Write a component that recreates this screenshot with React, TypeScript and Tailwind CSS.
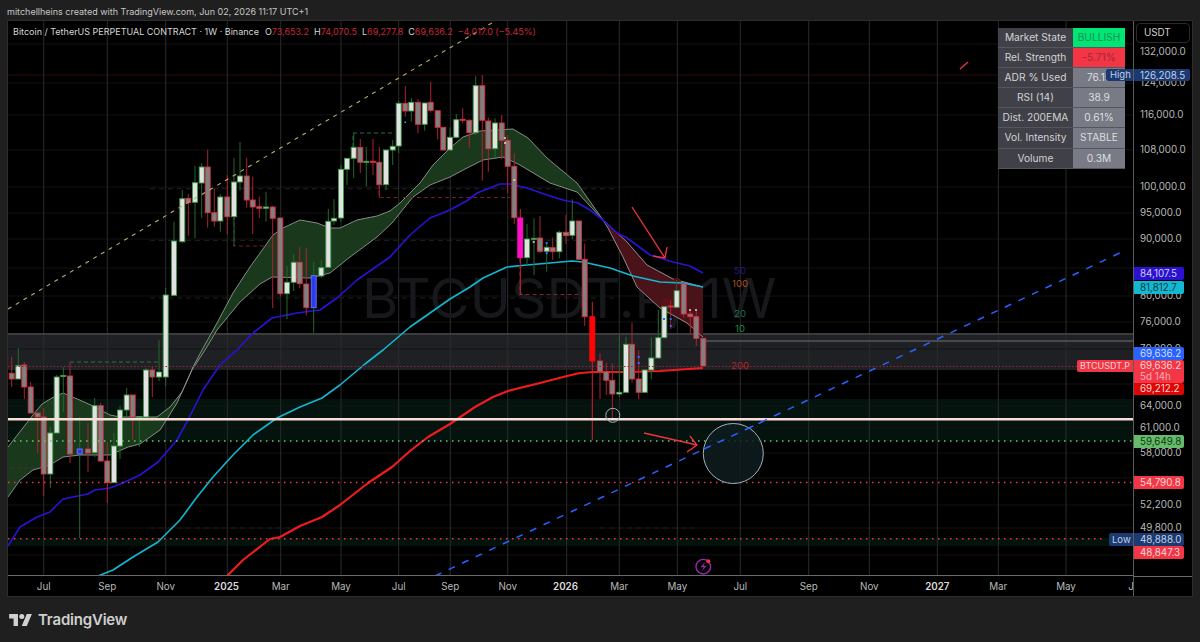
import React from "react";

type Kind = "g" | "r" | "b" | "m" | "f";
type C = [number, number, number, number, number, Kind];

const candles: C[] = [
  [11.7, 373.3, 379, 357, 387, "r"],
  [18.3, 365.7, 379, 348, 379, "g"],
  [24.3, 365, 387, 362, 399, "r"],
  [30.7, 387, 413, 382, 413, "r"],
  [37.7, 413, 417, 413, 453, "r"],
  [43.7, 417, 474, 408, 496, "r"],
  [50.3, 433, 474, 427, 488, "g"],
  [56.7, 377, 433, 375, 433, "g"],
  [63.3, 375.5, 376.5, 367, 412, "g"],
  [70, 376, 454, 362, 463, "r"],
  [79.7, 449, 454, 417, 538, "b"],
  [88, 449, 453, 423, 472, "r"],
  [94.7, 405.7, 452.7, 398, 457, "g"],
  [100.7, 405.7, 461, 403, 461, "r"],
  [107.3, 461, 482.7, 442, 503, "r"],
  [114, 446, 482.7, 433, 483, "g"],
  [120, 410, 446, 406, 459, "g"],
  [126.7, 395, 410, 388, 417, "g"],
  [132.7, 395, 417, 395, 440, "r"],
  [139.3, 416.5, 417.5, 417, 447, "g"],
  [146, 370, 417, 368, 418, "g"],
  [152.3, 370, 377, 367, 397, "r"],
  [159, 372, 377, 340, 381, "g"],
  [165.7, 295, 377, 287.7, 386, "g"],
  [174, 241, 295.3, 221.7, 295.3, "g"],
  [182.3, 198.7, 241.7, 190, 242.7, "g"],
  [188.3, 198.3, 202.7, 194, 235.7, "r"],
  [195, 182.7, 202.3, 166, 238, "g"],
  [201.7, 167, 183, 163, 217.7, "g"],
  [207.7, 167, 212.7, 149.7, 227.7, "r"],
  [214.3, 212.7, 221, 189, 226.7, "r"],
  [220.3, 197, 221, 194, 231.7, "g"],
  [227.3, 197, 216.7, 175, 234, "r"],
  [234, 182, 216.7, 158, 246, "g"],
  [240, 176, 182, 142, 190.7, "g"],
  [246.7, 176, 200, 157.7, 207.7, "r"],
  [252.7, 200, 207, 176.7, 234, "r"],
  [259.3, 206.7, 208.3, 196.7, 218, "r"],
  [266, 207, 208.3, 191.7, 221.7, "g"],
  [272.7, 207, 218.3, 206, 308, "r"],
  [280.3, 218, 293.7, 218, 296.7, "r"],
  [287, 282.3, 293.7, 266, 319, "g"],
  [293.7, 262.3, 282.3, 254, 291, "g"],
  [299.7, 262.3, 283.7, 247.3, 288.3, "r"],
  [306.3, 284, 307.7, 248, 315.3, "r"],
  [313.7, 275.7, 307.7, 262, 332.7, "b"],
  [321.3, 267.7, 276, 260, 278, "g"],
  [328.3, 221.3, 267.3, 209, 267.3, "g"],
  [334, 218.3, 221, 199, 225, "g"],
  [341, 169.3, 218, 165, 221.7, "g"],
  [347, 158.3, 169.3, 158, 185, "g"],
  [353.7, 147.3, 158.3, 133, 178, "g"],
  [360.3, 147.3, 162.3, 139, 173, "r"],
  [366.3, 161.3, 162.3, 147, 186.7, "g"],
  [373, 161.3, 162.3, 139, 175, "r"],
  [379.3, 162.3, 184.7, 147, 197.7, "r"],
  [386, 150, 184.7, 150, 190, "g"],
  [392.7, 146.3, 150, 140, 165, "g"],
  [398.7, 103.3, 146, 100.7, 153, "g"],
  [405.3, 103.3, 111, 86, 116.7, "r"],
  [411.3, 102.3, 111, 98, 121.7, "g"],
  [418, 102.3, 124.3, 99.3, 133.3, "r"],
  [424.7, 103, 124.3, 103, 130.7, "g"],
  [430.7, 102.3, 110.3, 81.7, 112.7, "r"],
  [437.7, 110.7, 127.3, 110.7, 139.3, "r"],
  [443.3, 127.3, 150, 127.3, 150.7, "r"],
  [450, 137.3, 150, 127.3, 150.7, "g"],
  [456.3, 119.7, 137.3, 114, 138.3, "g"],
  [462.7, 119.3, 120, 108.3, 123.3, "r"],
  [469.3, 120.3, 132.7, 119.3, 147.7, "r"],
  [475.7, 85.7, 132.7, 76, 135, "g"],
  [482.3, 85.7, 120.3, 75, 180.7, "r"],
  [488.3, 121, 148.7, 117.3, 171.7, "r"],
  [495, 123, 148.7, 118.3, 158.3, "g"],
  [501.7, 123, 140.3, 115, 159.3, "r"],
  [507.7, 140.3, 166.3, 135, 193.3, "r"],
  [514.3, 166.3, 217.7, 153.3, 224, "r"],
  [520.3, 218, 257.7, 209, 295, "m"],
  [527, 239, 257.7, 224, 265, "g"],
  [534, 238.3, 239.3, 218.3, 275, "g"],
  [540, 238, 251.3, 216, 253.3, "r"],
  [546.7, 247.3, 251.3, 243.3, 271.7, "g"],
  [552.7, 247.7, 251.7, 237.7, 260, "r"],
  [559.3, 232.3, 251.7, 230.7, 258.3, "g"],
  [566, 232.3, 235.7, 214.7, 244, "r"],
  [572.3, 221, 235.3, 199.3, 239.3, "g"],
  [579, 221, 259.3, 221, 260, "r"],
  [584.7, 259.3, 316.7, 244, 326, "r"],
  [592.3, 316.7, 361, 301.7, 440, "f"],
  [600, 361, 371.7, 353.3, 399, "r"],
  [606.3, 371.7, 380.3, 362.7, 395, "r"],
  [612.3, 380.3, 394, 363.3, 420, "r"],
  [619.3, 392.3, 394, 335, 396.7, "g"],
  [626, 344.3, 392.3, 336.7, 393.3, "g"],
  [632, 344.3, 379, 322.7, 382.7, "r"],
  [638.7, 379, 392.3, 350, 399.3, "r"],
  [644.7, 370, 392.3, 370, 393, "g"],
  [651.3, 358, 370, 337.3, 379.3, "g"],
  [658.3, 337.7, 358, 310, 358.3, "g"],
  [664.3, 306.7, 337.7, 306.7, 338.3, "g"],
  [670.7, 306, 306.8, 300, 329, "r"],
  [676.7, 290.7, 307.3, 280, 308, "g"],
  [683.7, 284, 314, 284, 318, "r"],
  [690.3, 314, 316.7, 310, 334, "r"],
  [696.3, 316.7, 338.3, 310, 346, "r"],
  [703.3, 338.3, 366, 338.3, 366.5, "r"],
];

const pts = (a: number[][]) => a.map((p) => p.join(",")).join(" ");

const blue = [[8,546],[20,527],[37,517],[50,512],[63,499],[88,494],[95,490],[110,488],[125,482],[140,475],[158,462],[177,440],[188,420],[203,390],[220,365],[238,349],[253,333],[272,318],[297,313],[320,310],[337,298],[357,280],[390,257],[410,235],[430,218],[450,210],[468,200],[477,193],[500,184],[510,184],[527,188],[547,195],[563,200],[578,203],[590,210],[603,220],[617,233],[627,238],[650,255],[673,262],[690,266],[703,273]];
const cyan = [[98,576],[113,570],[133,557],[158,542],[180,520],[197,497],[213,477],[233,455],[253,435],[277,418],[300,407],[322,398],[340,385],[365,364],[383,350],[410,327],[450,299],[470,287],[483,278],[507,267],[527,265],[550,263],[572,261],[583,262],[610,268],[633,276],[660,282],[683,283],[703,287]];
const red200 = [[227,576],[243,560],[270,539],[280,537],[300,526],[322,517],[340,505],[368,483],[392,467],[410,451],[428,437],[450,424],[475,407],[493,397],[508,391],[540,383],[567,376],[580,373],[593,372],[627,372],[660,371],[703,368]];
const upperG = [[8,447],[33,415],[42,404],[52,398],[63,393],[75,398],[93,406],[110,415],[120,417],[157,417],[170,407],[182,392],[193,367],[202,350],[217,323],[233,293],[250,267],[273,235],[283,228],[300,220],[317,223],[330,228],[340,228],[357,220],[377,216],[390,211],[400,203],[420,183],[433,165],[450,148],[463,137],[480,131],[513,129],[528,138],[547,158],[577,183],[603,220]];
const lowerG = [[8,497],[20,480],[33,470],[50,465],[63,457],[80,455],[97,455],[110,455],[128,447],[140,444],[160,430],[177,403],[192,370],[205,350],[217,330],[240,302],[260,284],[272,277],[310,278],[330,273],[350,257],[377,237],[392,223],[400,213],[413,197],[430,185],[450,177],[467,168],[483,160],[503,157],[520,165],[550,183],[577,192],[603,220]];
const upperR = [[603,220],[627,242],[647,265],[673,279],[703,287]];
const lowerR = [[603,220],[608,228],[623,257],[637,287],[660,308],[687,323],[703,337]];

const vGrid = [43.7, 107.3, 165.7, 227.3, 280.7, 341, 398.7, 450.3, 507.7, 566.7, 619.3, 677.3, 740.3, 808.7, 869.3, 937.3, 998.3, 1066];
const hGrid = [44, 83, 115, 150, 187, 213, 239, 268, 296, 322, 349, 384, 406, 428, 453, 478, 505, 528, 555];

const timeLabels: [string, number, boolean][] = [
  ["Jul", 43.7, false], ["Sep", 107.3, false], ["Nov", 165.7, false], ["2025", 226.5, true], ["Mar", 280.7, false],
  ["May", 341, false], ["Jul", 398.7, false], ["Sep", 450.3, false], ["Nov", 507.7, false], ["2026", 565.5, true],
  ["Mar", 619.3, false], ["May", 677.3, false], ["Jul", 740.3, false], ["Sep", 808.7, false], ["Nov", 869.3, false],
  ["2027", 937.3, true], ["Mar", 998.3, false], ["May", 1066, false], ["J", 1131, false],
];

const axisLabels: [string, number][] = [
  ["132,000.0", 52], ["124,000.0", 83], ["116,000.0", 115], ["108,000.0", 150], ["100,000.0", 187], ["95,000.0", 212.7],
  ["90,000.0", 239], ["80,000.0", 296], ["76,000.0", 322], ["70,000.0", 349], ["64,000.0", 406], ["61,000.0", 428],
  ["58,000.0", 453], ["52,200.0", 505], ["49,800.0", 528],
];

const rows: [string, string, string][] = [
  ["Market State", "BULLISH", "bg-[#00e676] text-[#14904f]"],
  ["Rel. Strength", "-5.71%", "bg-[#f23645] text-[#9c2b38]"],
  ["ADR % Used", "76.15", "bg-[#787b86] text-[#dedede]"],
  ["RSI (14)", "38.9", "bg-[#787b86] text-[#dedede]"],
  ["Dist. 200EMA", "0.61%", "bg-[#787b86] text-[#dedede]"],
  ["Vol. Intensity", "STABLE", "bg-[#787b86] text-[#dedede]"],
  ["Volume", "0.3M", "bg-[#787b86] text-[#dedede]"],
];

function Candle({ c }: { c: C }) {
  const [x, t, b, wt, wb, k] = c;
  const wick = k === "g" || k === "b" ? "#23692b" : k === "r" ? "#a92332" : "#d81f30";
  const fill = k === "g" ? "#e2e2e2" : k === "r" ? "#808080" : k === "b" ? "#2d3bf0" : k === "m" ? "#ff10c4" : "#ff0505";
  const stroke = k === "g" ? "#3d9a4b" : k === "r" ? "#df2a40" : k === "b" ? "#6a76ff" : fill;
  return (
    <g>
      <line x1={x} x2={x} y1={wt} y2={wb} stroke={wick} strokeWidth={1} />
      <rect x={x - 2.5} y={t} width={5} height={Math.max(b - t, 1)} fill={fill} stroke={stroke} strokeWidth={0.9} />
    </g>
  );
}

function Tag({ y, h, cls, children }: { y: number; h: number; cls: string; children: React.ReactNode }) {
  return (
    <div className={`absolute left-0 w-[50px] pl-[6px] flex flex-col justify-center rounded-r-[2px] leading-[11px] ${cls}`} style={{ top: y - 21, height: h }}>
      {children}
    </div>
  );
}

export default function App() {
  return (
    <div className="w-[1200px] h-[642px] bg-[#1f1f1f] flex flex-col overflow-hidden font-['Inter',sans-serif]">
      <div className="h-5 pl-[7px] pt-[5px] text-[9px] leading-[14px] text-[#c6c6c6] whitespace-nowrap">
        mitchellheins created with TradingView.com, Jun 02, 2026 11:17 UTC+1
      </div>

      <div className="mx-[7px] h-[577px] border border-[#2d2d2d] flex bg-black">
        <div className="w-[1125px] flex flex-col">
          <div className="relative h-[555px] overflow-hidden">
            <svg viewBox="8 21 1125 555" width={1125} height={555} className="block">
              <rect x={8} y={333} width={1125} height={37} fill="#1f2023" />
              <rect x={8} y={399} width={1125} height={42} fill="#04130d" />
              <rect x={8} y={538} width={1125} height={8} fill="#04120c" />
              {hGrid.map((y) => (
                <line key={y} x1={8} x2={1133} y1={y} y2={y} stroke="#131313" strokeWidth={1} />
              ))}
              <line x1={8} x2={1133} y1={75} y2={75} stroke="#2a0b10" strokeWidth={1} />
              {vGrid.map((x) => (
                <line key={x} x1={x} x2={x} y1={21} y2={576} stroke="#2b2b2b" strokeWidth={1} />
              ))}
              {[188.7, 240.3, 298].map((y) => (
                <line key={y} x1={150} x2={620} y1={y} y2={y} stroke="#212121" strokeDasharray="5 4" strokeWidth={1} />
              ))}
              <line x1={150} x2={300} y1={528} y2={528} stroke="#1d1d1d" strokeDasharray="5 4" />
              <line x1={600} x2={700} y1={528} y2={528} stroke="#1d1d1d" strokeDasharray="5 4" />
              <text x={362} y={318} fontSize={55.4} fill="#17181c" fontFamily="Inter, sans-serif">BTCUSDT.P, 1W</text>

              <line x1={8} x2={1133} y1={334} y2={334} stroke="#45464a" strokeWidth={1.5} />
              <line x1={705} x2={1133} y1={341} y2={341} stroke="#55565a" strokeWidth={1.5} />

              <polygon points={pts([...upperG, ...[...lowerG].reverse()])} fill="#1a381c" />
              <polyline points={pts(upperG)} fill="none" stroke="#858c85" strokeWidth={1} />
              <polyline points={pts(lowerG)} fill="none" stroke="#858c85" strokeWidth={1} />
              <polygon points={pts([...upperR, ...[...lowerR].reverse()])} fill="#4a1219" />
              <polyline points={pts(upperR)} fill="none" stroke="#9a8a8a" strokeWidth={1} />
              <polyline points={pts(lowerR)} fill="none" stroke="#9a8a8a" strokeWidth={1} />
              <circle cx={677} cy={282} r={4} fill="#5a1218" />
              <circle cx={666} cy={303} r={5} fill="#5a1218" />

              <polyline points={pts(blue)} fill="none" stroke="#2a12d8" strokeWidth={1.6} strokeLinejoin="round" />
              <polyline points={pts(cyan)} fill="none" stroke="#12b8d2" strokeWidth={1.6} strokeLinejoin="round" />
              <polyline points={pts(red200)} fill="none" stroke="#f01c1c" strokeWidth={2.2} strokeLinejoin="round" />

              <polyline points="353,147 353,133 395,133" fill="none" stroke="#23734a" strokeDasharray="4 3" />
              <line x1={70} x2={160} y1={362} y2={362} stroke="#23734a" strokeDasharray="4 3" />
              <polyline points="379,184 379,197.5 400,197.5" fill="none" stroke="#6e1f28" strokeDasharray="4 3" />
              <line x1={403} x2={510} y1={197.5} y2={197.5} stroke="#6e1f28" strokeDasharray="4 3" />
              <polyline points="234,216 234,246 275,246" fill="none" stroke="#6e1f28" strokeDasharray="4 3" />
              <polyline points="520,258 520,294.5 587,294.5" fill="none" stroke="#7e2530" strokeDasharray="4 3" />
              <line x1={10} x2={38} y1={468} y2={468} stroke="#4a2a2a" strokeDasharray="4 3" />

              {candles.map((c, i) => (
                <Candle key={i} c={c} />
              ))}

              {[[664,319],[670.7,319],[670.7,326],[638.7,357],[638.7,363],[546.7,243],[546.7,253]].map(([x, y], i) => (
                <rect key={i} x={x - 1} y={y - 1} width={2} height={2} fill="#2f6bff" />
              ))}
              {[[690,310],[696,310],[514.3,180],[505,138],[505,143],[533.7,242]].map(([x, y], i) => (
                <rect key={i} x={x - 1} y={y - 0.7} width={2} height={1.4} fill="#e6e6e6" />
              ))}
              <rect x={404.5} y={121.5} width={1.5} height={1.5} fill="#12b8d2" />

              <line x1={8} x2={1133} y1={366.5} y2={366.5} stroke="#8a2a38" strokeWidth={1} strokeDasharray="1.5 2" />
              <line x1={8} x2={1133} y1={419.3} y2={419.3} stroke="#f8ded6" strokeWidth={2.6} />
              <line x1={8} x2={1133} y1={441} y2={441} stroke="#5fcf6c" strokeWidth={1.5} strokeDasharray="1.5 4.5" />
              <line x1={8} x2={1133} y1={482.5} y2={482.5} stroke="#f23645" strokeWidth={1.5} strokeDasharray="1.5 4.5" />
              <line x1={8} x2={1105} y1={538.7} y2={538.7} stroke="#f23645" strokeWidth={1.5} strokeDasharray="1.5 4.5" />

              <line x1={8} x2={497} y1={309} y2={20} stroke="#b8ae70" strokeWidth={1.1} strokeDasharray="4 5" />
              <line x1={435} x2={1125} y1={576} y2={250.5} stroke="#2962ff" strokeWidth={1.5} strokeDasharray="7 8" />

              <circle cx={733.3} cy={453.5} r={30} fill="#0f1c1f" fillOpacity={0.85} stroke="#9db4be" strokeWidth={1} />
              <line x1={704} x2={762} y1={449} y2={422} stroke="#2962ff" strokeWidth={1.5} strokeDasharray="7 8" />
              <circle cx={612.8} cy={415.3} r={7} fill="none" stroke="#9db4be" strokeWidth={1} />

              <g fill="none" stroke="#f0343f" strokeWidth={1.3}>
                <path d="M632 207L665 258M653 256L665 258L667 247" />
                <path d="M644 433L697 445M690 436L697 445L687 452" />
                <path d="M960 69L968 62" />
              </g>

              <g fontSize={9.5} fontFamily="Inter, sans-serif" textAnchor="middle">
                <text x={740} y={273.5} fill="#1e1a86">50</text>
                <text x={740} y={287} fill="#a85018">100</text>
                <text x={740} y={316.5} fill="#1f6e4a">20</text>
                <text x={740} y={331.5} fill="#1f8a4f">10</text>
                <text x={740} y={368.5} fill="#b0202c">200</text>
              </g>

              <g fill="none">
                <circle cx={703.3} cy={566.7} r={7.3} stroke="#9c27b0" strokeWidth={1.4} />
                <path d="M705.5 561.5L700.5 567.3H703.8L701.3 571.8L706.6 565.7H703.4Z" fill="#9c27b0" />
                <circle cx={708.3} cy={561.3} r={2} fill="#f23645" />
              </g>
            </svg>

            <div className="absolute left-[5px] top-[4px] flex gap-[6px] text-[9px] leading-[14px] text-[#d6d6d6] whitespace-nowrap">
              <span>Bitcoin / TetherUS PERPETUAL CONTRACT · 1W · Binance</span>
              <span className="flex gap-[5px]">
                <span>O<span className="text-[#c4283a]">73,653.2</span></span>
                <span>H<span className="text-[#c4283a]">74,070.5</span></span>
                <span>L<span className="text-[#c4283a]">69,277.8</span></span>
                <span>C<span className="text-[#c4283a]">69,636.2</span></span>
                <span className="text-[#c4283a]">−4,017.0 (−5.45%)</span>
              </span>
            </div>

            <div className="absolute left-[990px] top-[7px] w-[127px] grid grid-cols-[75px_52px] text-[10.2px] leading-[19px] text-center">
              {rows.map(([a, b, cls]) => (
                <React.Fragment key={a}>
                  <div className="h-[20.1px] bg-[#404148] text-[#d2d2d2] border-b border-[#55565c] whitespace-nowrap">{a}</div>
                  <div className={`h-[20.1px] border-b border-[#55565c] ${cls}`}>{b}</div>
                </React.Fragment>
              ))}
            </div>

            <div className="absolute right-0 top-[339px] h-[12px] w-[56px] pl-[3px] bg-[#f23645] rounded-l-[2px] text-[9px] leading-[12px] text-[#f5d5d8] whitespace-nowrap">
              BTCUSDT.P
            </div>
            <div className="absolute right-0 top-[512px] h-[13px] w-[24px] pl-[3px] bg-[#1c3a72] rounded-l-[2px] text-[9.5px] leading-[13px] text-[#c3cfe4]">
              Low
            </div>
            <div className="absolute right-0 top-[48px] h-[12px] w-[27px] pl-[4px] bg-[#1c3a72] rounded-l-[2px] text-[9.5px] leading-[12px] text-[#c3cfe4]">
              High
            </div>
          </div>

          <div className="relative h-[21px] border-t border-[#6a6a6a] text-[9.8px] leading-[14px] text-[#b8b8b8]">
            {timeLabels.map(([t, x, bold]) => (
              <span key={t + x} className={bold ? "absolute top-[4px] -translate-x-1/2 font-semibold text-[#dcdcdc]" : "absolute top-[4px] -translate-x-1/2"} style={{ left: x - 8 }}>
                {t}
              </span>
            ))}
          </div>
        </div>

        <div className="relative w-[59px] border-l border-[#5c5c5c] text-[9.8px] leading-[12px] text-[#b8b8b8]">
          <div className="ml-[2px] mt-[2px] w-[54px] h-5 border border-[#2a2a2a] rounded-[4px] pl-[7px] leading-[18px] text-[#cfcfcf]">USDT</div>
          {axisLabels.map(([t, y]) => (
            <div key={t} className="absolute left-[6px]" style={{ top: y - 27 }}>{t}</div>
          ))}
          <div className="absolute inset-x-0 top-[555px] border-t border-[#6a6a6a]" />
          <Tag y={69} h={12} cls="bg-[#1c3a72] text-[#c3cfe4] w-[56px]">126,208.5</Tag>
          <Tag y={267} h={12.5} cls="bg-[#2a12d0] text-[#cfc9f5]">84,107.5</Tag>
          <Tag y={281} h={12.5} cls="bg-[#12b8d2] text-[#0a3a44]">81,812.7</Tag>
          <Tag y={347} h={12.5} cls="bg-[#2962ff] text-[#d3dffc]">69,636.2</Tag>
          <Tag y={359.5} h={23} cls="bg-[#f23645] text-[#f9d6d9]">
            <span>69,636.2</span>
            <span className="text-[#f4b0b6]">5d 14h</span>
          </Tag>
          <Tag y={382.5} h={12.5} cls="bg-[#e00505] text-[#f9d6d9]">69,212.2</Tag>
          <Tag y={435} h={12.5} cls="bg-[#66bb6a] text-[#103a18]">59,649.8</Tag>
          <Tag y={476} h={12.5} cls="bg-[#f23645] text-[#f9d6d9]">54,790.8</Tag>
          <Tag y={533} h={12.5} cls="bg-[#1c3a72] text-[#c3cfe4]">48,888.0</Tag>
          <Tag y={546} h={12.5} cls="bg-[#f23645] text-[#f9d6d9]">48,847.3</Tag>
        </div>
      </div>

      <div className="flex items-center gap-[6px] pl-[9px] pt-[14px]">
        <svg width={23} height={12} viewBox="0 0 36 19" fill="#d1d1d1">
          <path d="M14 19H7V7H0V0h14v19zM28 19h-8L28 0h8l-8 19z" />
          <circle cx={20} cy={4} r={4} />
        </svg>
        <span className="text-[15px] leading-[18px] font-semibold text-[#cfcfcf] tracking-[-0.2px]">TradingView</span>
      </div>
    </div>
  );
}
